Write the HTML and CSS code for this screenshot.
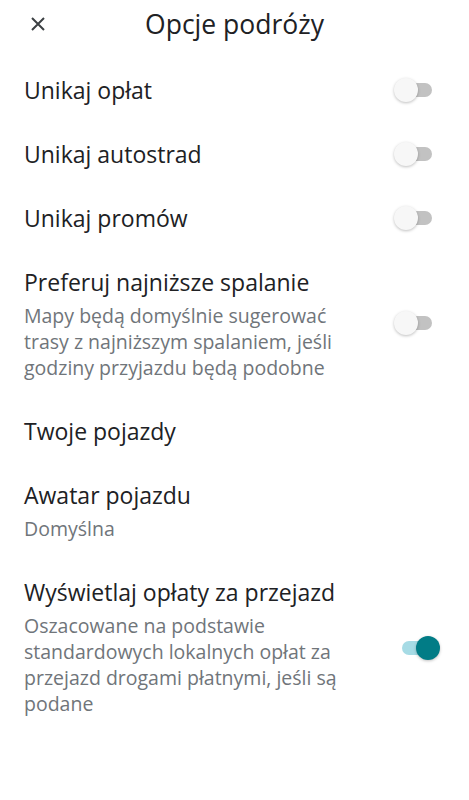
FILE: index.html
```html
<!DOCTYPE html>
<html lang="pl">
<head>
  <meta charset="UTF-8">
  <meta name="viewport" content="width=device-width, initial-scale=1.0">
  <title>Opcje podróży</title>
  <link rel="stylesheet" href="styles.css">
</head>
<body>

<div class="header">
  <button class="close-btn" aria-label="Zamknij">
    <svg width="14" height="14" viewBox="0 0 14 14">
      <path d="M1 1L13 13M13 1L1 13" stroke="#3c4043" stroke-width="2" fill="none"/>
    </svg>
  </button>
  <h1 class="header-title">Opcje podróży</h1>
  <div></div>
</div>

<div class="options">
  <div class="option">
    <div class="option-text">
      <div class="option-title">Unikaj opłat</div>
    </div>
    <div class="switch"><span class="track"></span><span class="knob"></span></div>
  </div>

  <div class="option">
    <div class="option-text">
      <div class="option-title">Unikaj autostrad</div>
    </div>
    <div class="switch"><span class="track"></span><span class="knob"></span></div>
  </div>

  <div class="option">
    <div class="option-text">
      <div class="option-title">Unikaj promów</div>
    </div>
    <div class="switch"><span class="track"></span><span class="knob"></span></div>
  </div>

  <div class="option">
    <div class="option-text">
      <div class="option-title">Preferuj najniższe spalanie</div>
      <div class="option-sub">Mapy będą domyślnie sugerować trasy z najniższym spalaniem, jeśli godziny przyjazdu będą podobne</div>
    </div>
    <div class="switch switch-up"><span class="track"></span><span class="knob"></span></div>
  </div>

  <div class="option">
    <div class="option-text">
      <div class="option-title">Twoje pojazdy</div>
    </div>
  </div>

  <div class="option">
    <div class="option-text">
      <div class="option-title">Awatar pojazdu</div>
      <div class="option-sub">Domyślna</div>
    </div>
  </div>

  <div class="option">
    <div class="option-text">
      <div class="option-title">Wyświetlaj opłaty za przejazd</div>
      <div class="option-sub">Oszacowane na podstawie standardowych lokalnych opłat za przejazd drogami płatnymi, jeśli są podane</div>
    </div>
    <div class="switch on"><span class="track"></span><span class="knob"></span></div>
  </div>
</div>

</body>
</html>
```

FILE: styles.css
```css
body {
  font-family: "Open Sans", Roboto, Arial, sans-serif;
  background: #fff;
  color: #202124;
  margin: 0;
  padding: 0;
}

.header {
  display: grid;
  grid-template-columns: 76px 1fr 76px;
  align-items: center;
  height: 48px;
  padding-bottom: 10px;
}

.close-btn {
  background: none;
  border: none;
  padding: 0;
  width: 76px;
  height: 48px;
  display: flex;
  align-items: center;
  justify-content: center;
  cursor: pointer;
}

.header-title {
  margin: 0;
  font-size: 26.5px;
  font-weight: 400;
  text-align: center;
  color: #202124;
}

.option {
  display: flex;
  align-items: center;
  padding: 18px 29px 18px 24px;
}

.option-text {
  flex: 1;
  max-width: 350px;
}

.option-title {
  font-size: 23px;
  line-height: 28px;
  color: #202124;
}

.option-sub {
  margin-top: 7px;
  font-size: 19.5px;
  line-height: 26px;
  color: #70757a;
}

.switch {
  position: relative;
  width: 46px;
  height: 24px;
  margin-left: auto;
}

.switch-up {
  margin-bottom: 4px;
}

.switch .track {
  position: absolute;
  left: 6px;
  top: 5px;
  width: 32px;
  height: 14px;
  border-radius: 7px;
  background: #c2c2c2;
}

.switch .knob {
  position: absolute;
  left: 0;
  top: 0;
  width: 24px;
  height: 24px;
  border-radius: 50%;
  background: #f7f7f7;
  box-shadow: 0 1px 3px rgba(0, 0, 0, 0.25);
}

.switch.on .track {
  left: 8px;
  width: 34px;
  background: #a6dbe5;
}

.switch.on .knob {
  left: auto;
  right: 0;
  background: #017c86;
}
```
